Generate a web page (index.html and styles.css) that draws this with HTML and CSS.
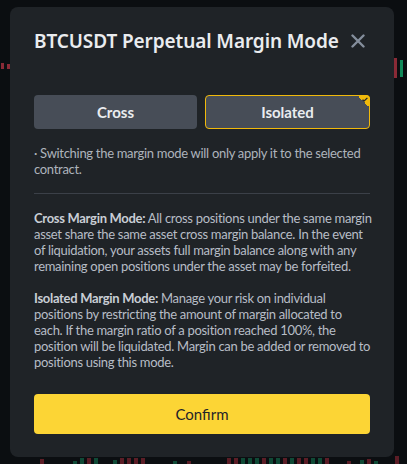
FILE: index.html
```html
<!DOCTYPE html>
<html lang="en">
<head>
    <meta charset="UTF-8">
    <meta name="viewport" content="width=device-width, initial-scale=1.0">
    <title>Margin Mode</title>
    <link rel="stylesheet" href="styles.css">
</head>
<body>
    <!-- chart behind the dialog -->
    <div class="chart">
        <div class="candle red" style="left:394px;top:58px;height:20px"></div>
        <div class="candle green" style="left:400px;top:60px;height:17px"></div>
        <div class="candle red" style="left:1px;top:63px;height:6px"></div>
        <div class="candle red" style="left:7px;top:64px;height:5px"></div>
        <div class="vol red" style="left:40px;height:5px"></div>
        <div class="vol green" style="left:73px;height:3px"></div>
        <div class="vol green" style="left:80px;height:6px"></div>
        <div class="vol red" style="left:87px;height:6px"></div>
        <div class="vol green" style="left:94px;height:6px"></div>
        <div class="vol green" style="left:113px;height:4px"></div>
        <div class="vol red" style="left:120px;height:6px"></div>
        <div class="vol red" style="left:127px;height:6px"></div>
        <div class="vol red" style="left:134px;height:6px"></div>
        <div class="vol red" style="left:141px;height:6px"></div>
        <div class="vol green" style="left:173px;height:3px"></div>
        <div class="vol red" style="left:187px;height:3px"></div>
        <div class="vol red" style="left:227px;height:6px"></div>
        <div class="vol red" style="left:234px;height:6px"></div>
        <div class="vol green" style="left:241px;height:6px"></div>
        <div class="vol green" style="left:248px;height:6px"></div>
        <div class="vol green" style="left:255px;height:6px"></div>
        <div class="vol red" style="left:262px;height:6px"></div>
        <div class="vol green" style="left:269px;height:6px"></div>
        <div class="vol green" style="left:276px;height:6px"></div>
        <div class="vol red" style="left:283px;height:6px"></div>
        <div class="vol green" style="left:290px;height:6px"></div>
        <div class="vol red" style="left:297px;height:6px"></div>
        <div class="vol red" style="left:304px;height:6px"></div>
        <div class="vol green" style="left:311px;height:6px"></div>
        <div class="vol green" style="left:318px;height:6px"></div>
        <div class="vol red" style="left:325px;height:6px"></div>
        <div class="vol red" style="left:347px;height:3px"></div>
        <div class="vol green" style="left:360px;height:4px"></div>
        <div class="vol red" style="left:367px;height:5px"></div>
        <div class="vol green" style="left:374px;height:3px"></div>
        <div class="vol red" style="left:395px;height:8px"></div>
    </div>

    <div class="modal">
        <div class="modal_head">
            <h2>BTCUSDT Perpetual Margin Mode</h2>
            <svg class="close" width="14" height="14" viewBox="0 0 14 14">
                <path d="M1.5 1.5 L12.5 12.5 M12.5 1.5 L1.5 12.5" stroke="#848e9c" stroke-width="2.4" stroke-linecap="round"/>
            </svg>
        </div>

        <div class="mode_row">
            <div class="mode_btn">Cross</div>
            <div class="mode_btn active">
                Isolated
                <span class="corner">
                    <svg width="6" height="5" viewBox="0 0 6 5">
                        <path d="M0.6 2.6 L2.2 4 L5.4 0.8" stroke="#1e2329" stroke-width="1.2" fill="none"/>
                    </svg>
                </span>
            </div>
        </div>

        <p class="note">· Switching the margin mode will only apply it to the selected<br>contract.</p>

        <div class="line"></div>

        <p class="desc"><b>Cross Margin Mode:</b> All cross positions under the same margin<br>asset share the same asset cross margin balance. In the event<br>of liquidation, your assets full margin balance along with any<br>remaining open positions under the asset may be forfeited.</p>

        <p class="desc"><b>Isolated Margin Mode:</b> Manage your risk on individual<br>positions by restricting the amount of margin allocated to<br>each. If the margin ratio of a position reached 100%, the<br>position will be liquidated. Margin can be added or removed to<br>positions using this mode.</p>

        <div class="confirm">Confirm</div>
    </div>
</body>
</html>
```

FILE: styles.css
```css
body{
    margin: 0;
    background-color: #0b0e11;
    font-family: Lato, "Liberation Sans", sans-serif;
    position: relative;
    height: 464px;
    overflow: hidden;
}

.chart{
    position: absolute;
    left: 0;
    top: 0;
    width: 407px;
    height: 464px;
}
.candle{
    position: absolute;
    width: 3px;
}
.vol{
    position: absolute;
    bottom: 0;
    width: 4px;
}
.red{
    background-color: #5c1d26;
}
.green{
    background-color: #0f4a36;
}
.candle.red{
    background-color: #8a2a36;
}
.candle.green{
    background-color: #128a5a;
}

.modal{
    position: relative;
    margin: 7px 0 0 10px;
    width: 384px;
    height: 450px;
    box-sizing: border-box;
    padding: 20px 24px 0 24px;
    background-color: #1f2327;
    border-radius: 8px;
    display: flex;
    flex-direction: column;
}

.modal_head{
    display: flex;
    align-items: center;
    justify-content: space-between;
    height: 28px;
}
.modal_head h2{
    margin: 0;
    font-family: "Noto Sans", sans-serif;
    font-size: 19px;
    font-weight: 600;
    color: #eaecef;
    letter-spacing: -0.1px;
}
.close{
    margin-right: 5px;
}

.mode_row{
    margin-top: 40px;
    display: flex;
    gap: 8px;
}
.mode_btn{
    position: relative;
    flex: 1;
    height: 34px;
    box-sizing: border-box;
    display: flex;
    justify-content: center;
    align-items: center;
    background-color: #474d57;
    border-radius: 4px;
    color: #eaecef;
    font-size: 15px;
    font-weight: 700;
}
.mode_btn.active{
    border: 1px solid #f0b90b;
}
.corner{
    position: absolute;
    top: -1px;
    right: -1px;
    width: 13px;
    height: 13px;
    background: linear-gradient(to bottom left, #f0b90b 50%, transparent 50%);
    border-top-right-radius: 4px;
}
.corner svg{
    position: absolute;
    top: 2px;
    right: 2px;
}

.note{
    margin: 16px 0 0 0;
    font-size: 13px;
    line-height: 16px;
    letter-spacing: -0.3px;
    color: #aeb4bc;
    white-space: nowrap;
}

.line{
    margin-top: 16px;
    height: 1px;
    background-color: #3b4048;
}

.desc{
    margin: 16px 0 0 0;
    font-size: 13px;
    line-height: 16px;
    letter-spacing: -0.3px;
    color: #b7bdc6;
    white-space: nowrap;
}
.desc b{
    font-weight: 700;
    color: #c9ced5;
}

.confirm{
    margin-top: 24px;
    height: 40px;
    border-radius: 4px;
    background-color: #fcd535;
    color: #1e2329;
    font-size: 15px;
    display: flex;
    justify-content: center;
    align-items: center;
}
```
